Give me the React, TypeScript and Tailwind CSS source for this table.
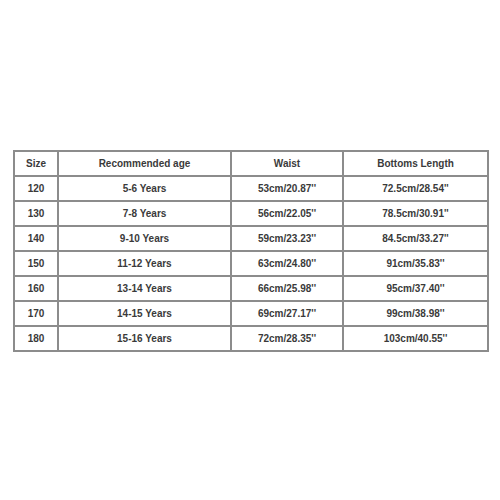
const rows = [
  ["120", "5-6 Years", "53cm/20.87''", "72.5cm/28.54''"],
  ["130", "7-8 Years", "56cm/22.05''", "78.5cm/30.91''"],
  ["140", "9-10 Years", "59cm/23.23''", "84.5cm/33.27''"],
  ["150", "11-12 Years", "63cm/24.80''", "91cm/35.83''"],
  ["160", "13-14 Years", "66cm/25.98''", "95cm/37.40''"],
  ["170", "14-15 Years", "69cm/27.17''", "99cm/38.98''"],
  ["180", "15-16 Years", "72cm/28.35''", "103cm/40.55''"],
];

const header = ["Size", "Recommended age", "Waist", "Bottoms Length"];

export default function App() {
  return (
    <div className="w-[500px] h-[500px] bg-white pt-[150px] pl-[13px] font-['Liberation_Sans',Arial,sans-serif]">
      <div className="grid grid-cols-[42px_171px_110px_143px] auto-rows-[23px] gap-[2px] p-[2px] bg-[#8c8c8c] w-fit">
        {header.map(h => (
          <div key={h} className="bg-white flex items-center justify-center text-[10px] font-bold text-[#3a3a3a]">
            {h}
          </div>
        ))}
        {rows.map(r =>
          r.map((c, i) => (
            <div key={r[0] + i} className="bg-white flex items-center justify-center text-[10px] font-bold text-[#3a3a3a]">
              {c}
            </div>
          )),
        )}
      </div>
    </div>
  );
}
